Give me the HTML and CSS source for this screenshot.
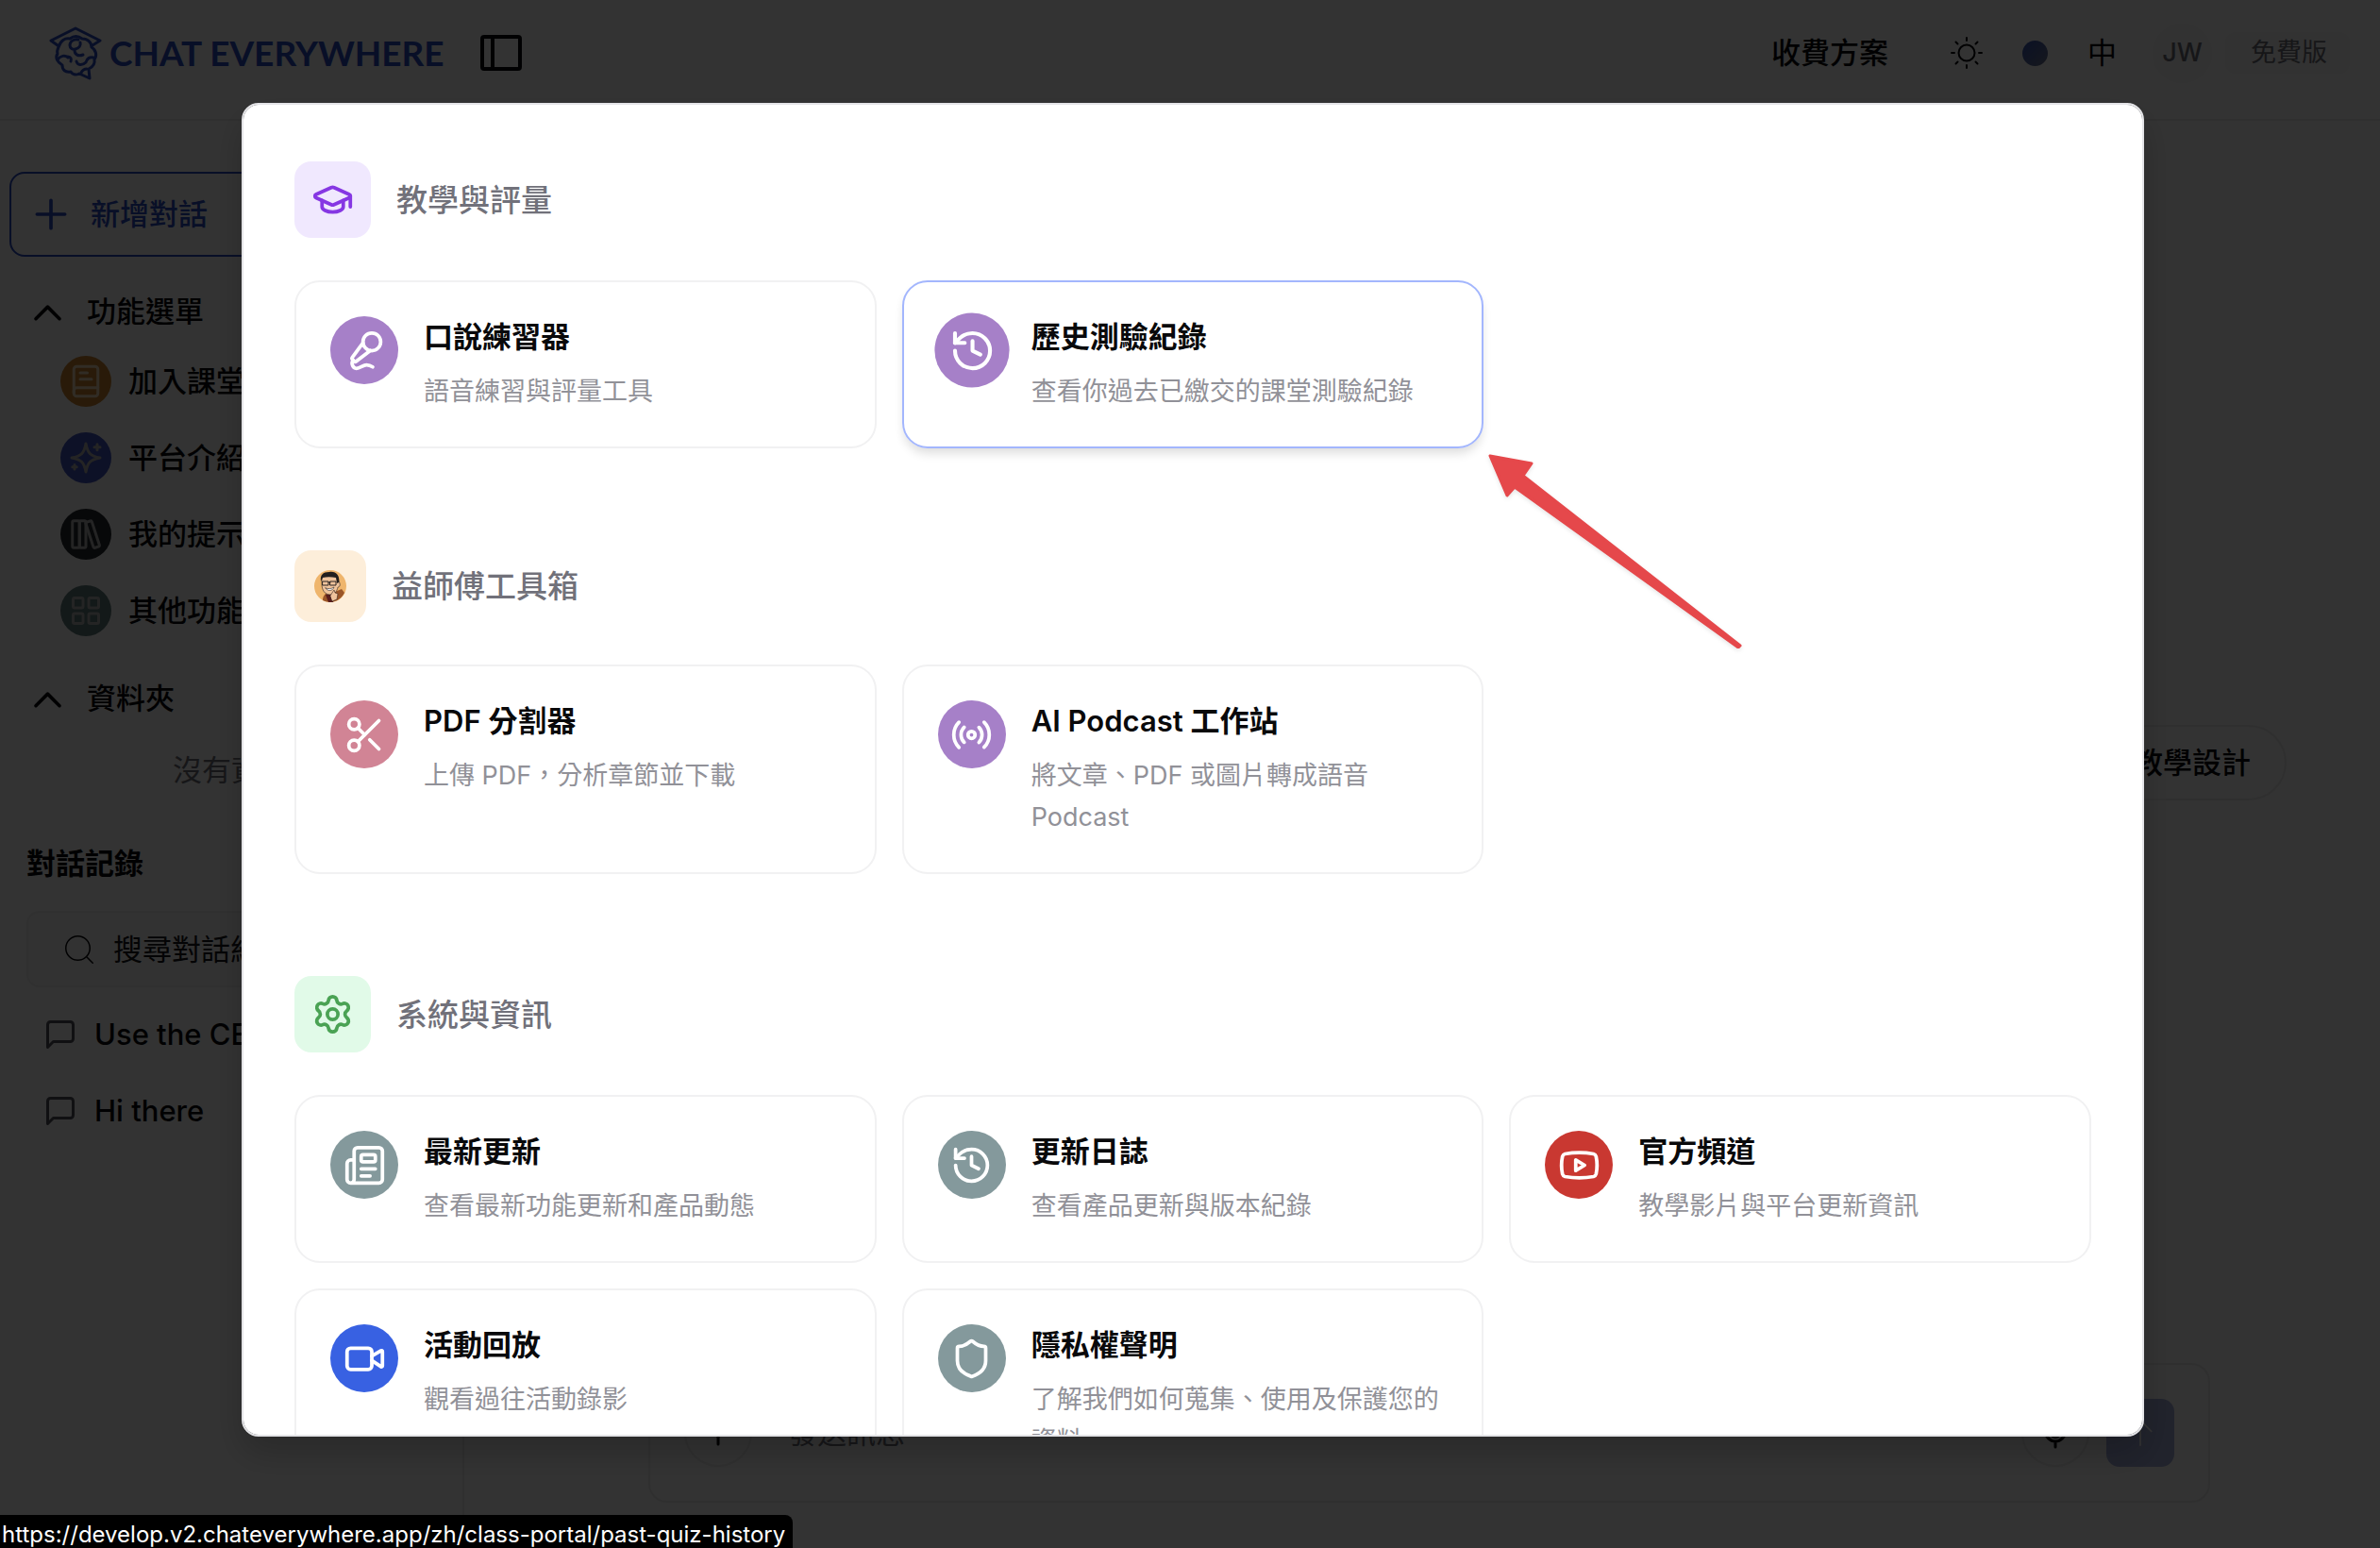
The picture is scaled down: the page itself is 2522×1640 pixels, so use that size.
FILE: index.html
```html
<!DOCTYPE html>
<html lang="zh-Hant">
<head>
    <meta charset="UTF-8">
    <meta name="viewport" content="width=device-width, initial-scale=1.0">
    <title>Chat Everywhere</title>
    <link rel="stylesheet" href="styles.css">
</head>
<body>
    <!-- Icons -->
    <svg class="sprite" aria-hidden="true">
        <symbol id="i-plus" viewBox="0 0 24 24"><path d="M4 12h16M12 4v16"/></symbol>
        <symbol id="i-up" viewBox="0 0 24 24"><path d="m5 16 7-7 7 7"/></symbol>
        <symbol id="i-history" viewBox="0 0 24 24"><path d="M3 12a9 9 0 1 0 9-9 9.75 9.75 0 0 0-6.74 2.74L3 8"/><path d="M3 3v5h5"/><path d="M12 7v5l4 2"/></symbol>
        <symbol id="i-chat" viewBox="0 0 24 24"><path d="M21 15a2 2 0 0 1-2 2H7l-4 4V5a2 2 0 0 1 2-2h14a2 2 0 0 1 2 2z"/></symbol>
    </svg>

    <header class="topbar">
        <a class="logo" href="#">
            <svg class="logo-mark" viewBox="0 0 56 58">
                <path d="M2 16 28 3l26 13-8 5M2 16l7 5"/>
                <path d="M10 23c2-7 7-10 12-9 4-3 9-3 13 0 6 0 10 4 10 9 5 3 6 9 3 13 1 5-2 8-6 10l1 10-11-5c-4 2-7 1-9-2-6 1-9-2-9-7-5-3-8-8-5-12-1-3 0-5 1-7z"/>
                <path d="M31 15c-5-1-9 2-9 6 0 3 3 5 6 4 4-1 6-4 5-7M27 26c0 5 4 7 9 5M9 36c3-4 8-5 11-2M20 33c3 0 4 3 3 5M29 38c1 4 6 5 10 1 1-4 4-6 8-5M40 46c-3 0-5 2-6 4"/>
            </svg>
            <span>CHAT EVERYWHERE</span>
        </a>
        <button class="icon-button" aria-label="側邊欄">
            <svg class="panel-icon" viewBox="0 0 44 38"><rect x="2" y="2" width="40" height="34" rx="2"/><path d="M13 2v34"/></svg>
        </button>
        <nav class="top-nav">
            <a class="pricing" href="#">收費方案</a>
            <button class="icon-button" aria-label="主題">
                <svg class="sun-icon" viewBox="0 0 34 34"><circle cx="17" cy="17" r="8.500"/><path d="M17 1v3M17 30v3M1 17h3M30 17h3M5.500 5.500l2 2M26.500 26.500l2 2M5.500 28.500l2-2M26.500 7.500l2-2"/></svg>
            </button>
            <button class="color-dot" aria-label="顏色"></button>
            <button class="lang">中</button>
            <button class="avatar">JW</button>
            <span class="plan">免費版</span>
        </nav>
    </header>

    <div class="layout">
        <aside class="sidebar">
            <button class="new-chat">
                <svg class="icon-lg" viewBox="0 0 24 24"><use href="#i-plus"/></svg>
                新增對話
            </button>

            <section class="group">
                <button class="group-title"><svg class="icon-caret" viewBox="0 0 24 24"><use href="#i-up"/></svg>功能選單</button>
                <a class="menu-item" href="#">
                    <span class="dot dot-orange"><svg class="icon-menu" viewBox="0 0 24 24"><rect x="3.500" y="1.500" width="17" height="21" rx="2"/><path d="M3.500 20v-1.500a2 2 0 0 1 2-2h15M8 6h5M8 10.500h8"/></svg></span>
                    加入課堂
                </a>
                <a class="menu-item" href="#">
                    <span class="dot dot-blue"><svg class="icon-menu" viewBox="0 0 24 24"><path d="M12 2c1.200 6.500 3 8.700 10 10-7 1.300-8.800 3.500-10 10-1.200-6.500-3-8.700-10-10 7-1.300 8.800-3.500 10-10zM20 2.500v4M18 4.500h4M4 17v3M2.500 18.500h3"/></svg></span>
                    平台介紹
                </a>
                <a class="menu-item" href="#">
                    <span class="dot dot-black"><svg class="icon-menu" viewBox="0 0 24 24"><rect x="2.500" y="2.500" width="5" height="19" rx="1"/><rect x="7.500" y="2.500" width="4.500" height="19" rx="1"/><rect x="14.500" y="2.500" width="4.500" height="19" rx="1" transform="rotate(-18 17 12)"/></svg></span>
                    我的提示詞
                </a>
                <a class="menu-item" href="#">
                    <span class="dot dot-teal"><svg class="icon-menu" viewBox="0 0 24 24"><rect x="3" y="3" width="7" height="7" rx="1"/><rect x="14" y="3" width="7" height="7" rx="1"/><rect x="14" y="14" width="7" height="7" rx="1"/><rect x="3" y="14" width="7" height="7" rx="1"/></svg></span>
                    其他功能
                </a>
            </section>

            <section class="group">
                <button class="group-title"><svg class="icon-caret" viewBox="0 0 24 24"><use href="#i-up"/></svg>資料夾</button>
                <p class="empty">沒有資料</p>
            </section>

            <h2 class="history-title">對話記錄</h2>
            <label class="search">
                <svg class="icon-search" viewBox="0 0 24 24"><circle cx="11" cy="11" r="8.500"/><path d="m17.200 17.200 4.300 4.300"/></svg>
                <input type="text" placeholder="搜尋對話紀錄" aria-label="搜尋對話紀錄">
            </label>
            <div class="chats">
                <a class="chat" href="#"><svg class="icon-chat" viewBox="0 0 24 24"><use href="#i-chat"/></svg>Use the CE platform</a>
                <a class="chat" href="#"><svg class="icon-chat" viewBox="0 0 24 24"><use href="#i-chat"/></svg>Hi there</a>
            </div>
        </aside>

        <main class="main">
            <div class="suggestions">
                <button class="chip">教學設計</button>
            </div>
            <form class="composer">
                <button type="button" class="round" aria-label="附加"><svg class="icon-round" viewBox="0 0 24 24"><use href="#i-plus"/></svg></button>
                <input type="text" placeholder="發送訊息" aria-label="發送訊息">
                <button type="button" class="round" aria-label="語音"><svg class="icon-round" viewBox="0 0 24 24"><rect x="9" y="2" width="6" height="13" rx="3"/><path d="M19 11a7 7 0 0 1-14 0M12 18v4"/></svg></button>
                <button type="button" class="send" aria-label="送出"><svg class="icon-send" viewBox="0 0 24 24"><path d="M12 20V4M5 11l7-7 7 7"/></svg></button>
            </form>
        </main>
    </div>

    <div class="overlay">
        <div class="modal" role="dialog" aria-modal="true">
            <section class="section">
                <header class="section-header">
                    <span class="section-icon purple">
                        <svg class="icon" viewBox="0 0 24 24"><path d="M21.420 10.922a1 1 0 0 0-.019-1.838L12.830 5.180a2 2 0 0 0-1.660 0L2.600 9.080a1 1 0 0 0 0 1.832l8.570 3.908a2 2 0 0 0 1.660 0z"/><path d="M22 10v6"/><path d="M6 12.500V16a6 3 0 0 0 12 0v-3.500"/></svg>
                    </span>
                    <h2>教學與評量</h2>
                </header>
                <div class="cards">
                    <a class="card" href="#">
                        <span class="badge bg-purple"><svg class="icon" viewBox="0 0 24 24"><path d="m11 7.601-5.994 8.190a1 1 0 0 0 .1 1.298l.817.818a1 1 0 0 0 1.314.087L15.090 12"/><path d="M16.500 21.174C15.500 20.500 14.372 20 13 20c-2.058 0-3.928 2.356-6 2-2.072-.356-2.775-3.369-1.500-4.500"/><circle cx="16" cy="7" r="5"/></svg></span>
                        <span class="card-text"><strong>口說練習器</strong><span>語音練習與評量工具</span></span>
                    </a>
                    <a class="card active" href="#">
                        <span class="badge bg-purple"><svg class="icon" viewBox="0 0 24 24"><use href="#i-history"/></svg></span>
                        <span class="card-text"><strong>歷史測驗紀錄</strong><span>查看你過去已繳交的課堂測驗紀錄</span></span>
                    </a>
                </div>
            </section>

            <section class="section">
                <header class="section-header">
                    <span class="section-icon peach">
                        <svg class="portrait" viewBox="0 0 34 34">
                            <circle cx="17" cy="17" r="17" fill="#efb56c"/>
                            <path d="M9 32c0-4 2-7 5-8l8-1 7-3 3 4a17 17 0 0 1-23 8z" fill="#9a5528"/>
                            <path d="M12 26l3 8h5l2-9z" fill="#5a1d1c"/>
                            <path d="M8 10c0-5 4-7 9-7s9 3 9 8l1 3c1 3-1 4-2 4-1 5-4 8-8 8-6 0-9-5-9-11z" fill="#efc39c" stroke="#2a2321" stroke-width=".6"/>
                            <path d="M7 12C6 5 9 2 16 2c7-1 11 3 10 11l-2 1-1-6c-5-1-10-1-14 0z" fill="#231f1e"/>
                            <path d="M9 12h6v4H9zM17 12h6v4h-6zM15 13h2" fill="none" stroke="#2a2321" stroke-width="1"/>
                            <path d="M12 19c3 1 6 1 9-1-1 4-7 5-9 1z" fill="#fff" stroke="#2a2321" stroke-width=".6"/>
                            <path d="M17 27l4-6 1 3 3 1-1 6-5 2z" fill="#efc39c" stroke="#3a2820" stroke-width=".6"/>
                        </svg>
                    </span>
                    <h2>益師傅工具箱</h2>
                </header>
                <div class="cards">
                    <a class="card" href="#">
                        <span class="badge bg-pink"><svg class="icon" viewBox="0 0 24 24"><circle cx="6" cy="6" r="3"/><path d="M8.120 8.120 12 12"/><path d="M20 4 8.120 15.880"/><circle cx="6" cy="18" r="3"/><path d="M14.800 14.800 20 20"/></svg></span>
                        <span class="card-text"><strong>PDF 分割器</strong><span>上傳 PDF，分析章節並下載</span></span>
                    </a>
                    <a class="card" href="#">
                        <span class="badge bg-purple"><svg class="icon" viewBox="0 0 24 24"><path d="M4.900 19.100C1 15.200 1 8.800 4.900 4.900"/><path d="M7.800 16.200c-2.300-2.300-2.300-6.100 0-8.500"/><circle cx="12" cy="12" r="2"/><path d="M16.200 7.800c2.300 2.300 2.300 6.100 0 8.500"/><path d="M19.100 4.900C23 8.800 23 15.100 19.100 19"/></svg></span>
                        <span class="card-text"><strong>AI Podcast 工作站</strong><span>將文章、PDF 或圖片轉成語音 Podcast</span></span>
                    </a>
                </div>
            </section>

            <section class="section">
                <header class="section-header">
                    <span class="section-icon green">
                        <svg class="icon" viewBox="0 0 24 24"><path d="M9.671 4.136a2.340 2.340 0 0 1 4.659 0 2.340 2.340 0 0 0 3.319 1.915 2.340 2.340 0 0 1 2.330 4.033 2.340 2.340 0 0 0 0 3.831 2.340 2.340 0 0 1-2.330 4.033 2.340 2.340 0 0 0-3.319 1.915 2.340 2.340 0 0 1-4.659 0 2.340 2.340 0 0 0-3.320-1.915 2.340 2.340 0 0 1-2.330-4.033 2.340 2.340 0 0 0 0-3.831A2.340 2.340 0 0 1 6.350 6.051a2.340 2.340 0 0 0 3.319-1.915"/><circle cx="12" cy="12" r="3"/></svg>
                    </span>
                    <h2>系統與資訊</h2>
                </header>
                <div class="cards">
                    <a class="card" href="#">
                        <span class="badge bg-slate"><svg class="icon" viewBox="0 0 24 24"><path d="M15 18h-5M18 14h-8"/><path d="M4 22h16a2 2 0 0 0 2-2V4a2 2 0 0 0-2-2H8a2 2 0 0 0-2 2v16a2 2 0 0 1-4 0v-9a2 2 0 0 1 2-2h2"/><rect x="10" y="6" width="8" height="4" rx="1"/></svg></span>
                        <span class="card-text"><strong>最新更新</strong><span>查看最新功能更新和產品動態</span></span>
                    </a>
                    <a class="card" href="#">
                        <span class="badge bg-slate"><svg class="icon" viewBox="0 0 24 24"><use href="#i-history"/></svg></span>
                        <span class="card-text"><strong>更新日誌</strong><span>查看產品更新與版本紀錄</span></span>
                    </a>
                    <a class="card" href="#">
                        <span class="badge bg-red"><svg class="icon" viewBox="0 0 24 24"><path d="M2.500 17a24.120 24.120 0 0 1 0-10 2 2 0 0 1 1.400-1.400 49.560 49.560 0 0 1 16.200 0A2 2 0 0 1 21.500 7a24.120 24.120 0 0 1 0 10 2 2 0 0 1-1.400 1.400 49.550 49.550 0 0 1-16.200 0A2 2 0 0 1 2.500 17"/><path d="m10 15 5-3-5-3z"/></svg></span>
                        <span class="card-text"><strong>官方頻道</strong><span>教學影片與平台更新資訊</span></span>
                    </a>
                    <a class="card" href="#">
                        <span class="badge bg-blue"><svg class="icon" viewBox="0 0 24 24"><path d="m16 13 5.223 3.482a.5.5 0 0 0 .777-.416V7.870a.5.5 0 0 0-.752-.432L16 10.500"/><rect x="2" y="6" width="14" height="12" rx="2"/></svg></span>
                        <span class="card-text"><strong>活動回放</strong><span>觀看過往活動錄影</span></span>
                    </a>
                    <a class="card" href="#">
                        <span class="badge bg-slate"><svg class="icon" viewBox="0 0 24 24"><path d="M20 13c0 5-3.500 7.500-7.660 8.950a1 1 0 0 1-.67-.01C7.500 20.500 4 18 4 13V6a1 1 0 0 1 1-1c2 0 4.500-1.200 6.240-2.720a1.170 1.170 0 0 1 1.520 0C14.510 3.810 17 5 19 5a1 1 0 0 1 1 1z"/></svg></span>
                        <span class="card-text"><strong>隱私權聲明</strong><span>了解我們如何蒐集、使用及保護您的資料</span></span>
                    </a>
                </div>
            </section>
        </div>
    </div>

    <!-- Pointer to the history card -->
    <svg class="arrow" viewBox="0 0 272 208" aria-hidden="true">
        <path d="M4 4 48 12 39 25 269 205 267 207 30 37 22 46z"/>
    </svg>

    <div class="status-url">https://develop.v2.chateverywhere.app/zh/class-portal/past-quiz-history</div>
</body>
</html>
```
FILE: styles.css
```css
* {
    box-sizing: border-box;
}

body {
    margin: 0;
    height: 100vh;
    overflow: hidden;
    display: flex;
    flex-direction: column;
    background: #fcfcfc;
    color: #09090b;
    font-family: Inter, "Noto Sans CJK TC", sans-serif;
    font-size: 31px;
    font-weight: 500;
    line-height: 44px;
}

a {
    color: inherit;
    text-decoration: none;
}

button,
input {
    font: inherit;
    color: inherit;
    background: none;
    border: 0;
    padding: 0;
}

h2,
p {
    margin: 0;
    font-size: inherit;
}

svg {
    display: block;
    flex: none;
    fill: none;
    stroke: currentColor;
    stroke-width: 2;
    stroke-linecap: round;
    stroke-linejoin: round;
}

.sprite {
    display: none;
}

/* Top bar */
.topbar {
    height: 128px;
    flex: none;
    display: flex;
    align-items: center;
    padding: 0 32px 14px 52px;
    border-bottom: 2px solid #e8e8e8;
}

.logo {
    display: flex;
    align-items: center;
    gap: 8px;
    margin-right: 38px;
    color: #2c4bc4;
    font-family: Lato, sans-serif;
    font-size: 37px;
    font-weight: 700;
}

.logo-mark {
    width: 56px;
    height: 58px;
    stroke-width: 3;
}

.panel-icon {
    width: 44px;
    height: 38px;
    stroke-width: 4;
}

.top-nav {
    display: flex;
    align-items: center;
    margin-left: auto;
}

.sun-icon {
    width: 34px;
    height: 34px;
    margin-left: 66px;
}

.color-dot {
    width: 27px;
    height: 27px;
    margin-left: 42px;
    border-radius: 50%;
    background: linear-gradient(135deg, #3454b8, #6e7690);
}

.lang {
    margin-left: 42px;
    font-weight: 400;
}

.avatar {
    width: 63px;
    height: 63px;
    margin-left: 38px;
    border-radius: 50%;
    background: #f9f9f9;
    color: #71717a;
    font-size: 27px;
}

.plan {
    margin-left: 14px;
    padding: 0 24px 0 27px;
    border-radius: 12px;
    background: #f9f9f9;
    color: #71717a;
    font-size: 27px;
    font-weight: 400;
}

/* Sidebar */
.layout {
    flex: 1;
    display: flex;
    min-height: 0;
}

.sidebar {
    width: 492px;
    flex: none;
    padding-top: 54px;
    border-right: 2px solid #e8e8e8;
}

.new-chat {
    display: flex;
    align-items: center;
    gap: 20px;
    width: 470px;
    height: 90px;
    margin: 0 10px 5px;
    padding: 0 20px;
    border: 2px solid #2c4bc4;
    border-radius: 16px;
    color: #2c4bc4;
}

.icon-lg {
    width: 44px;
    height: 44px;
}

.group {
    padding-top: 20px;
}

.group-title {
    display: flex;
    align-items: center;
    gap: 20px;
    height: 66px;
    padding-left: 29px;
}

.icon-caret {
    width: 43px;
    height: 43px;
}

.menu-item {
    display: flex;
    align-items: center;
    gap: 18px;
    height: 81px;
    padding-left: 64px;
}

.dot {
    display: flex;
    align-items: center;
    justify-content: center;
    width: 54px;
    height: 54px;
    border-radius: 50%;
    color: #b4b4b4;
}

.icon-menu {
    width: 36px;
    height: 36px;
}

.dot-orange {
    background: #cb8430;
    color: #f2dcb8;
}

.dot-blue {
    background: #4054c4;
}

.dot-black {
    background: #24282e;
}

.dot-teal {
    background: #5f7c7c;
}

.empty {
    height: 86px;
    line-height: 86px;
    text-align: center;
    color: #71717a;
    font-weight: 400;
}

.history-title {
    margin: 23px 0 17px 28px;
    line-height: 66px;
    font-weight: 700;
}

.search {
    display: flex;
    align-items: center;
    gap: 18px;
    height: 81px;
    margin: 0 28px 9px;
    padding-left: 36px;
    border: 2px solid #efefef;
    border-radius: 14px;
    background: #f8f8f8;
    font-weight: 400;
}

.search input {
    flex: 1;
    min-width: 0;
}

.search input::placeholder {
    color: #18181b;
}

.icon-search {
    width: 36px;
    height: 36px;
    stroke-width: 1;
}

.chat {
    display: flex;
    align-items: center;
    gap: 18px;
    height: 81px;
    padding-left: 46px;
    white-space: nowrap;
}

.icon-chat {
    width: 36px;
    height: 36px;
    color: #52525b;
}

/* Main area */
.main {
    flex: 1;
    display: flex;
    flex-direction: column;
    padding: 44px 180px 48px 195px;
}

.suggestions {
    flex: 1;
    display: flex;
    align-items: center;
    justify-content: flex-end;
    margin-right: -81px;
}

.chip {
    height: 80px;
    padding: 0 36px;
    border: 2px solid #ececec;
    border-radius: 40px;
}

.composer {
    display: flex;
    align-items: center;
    padding: 36px;
    border: 2px solid #ececec;
    border-radius: 20px;
}

.composer input {
    flex: 1;
    min-width: 0;
    margin-left: 38px;
    font-weight: 400;
}

.composer input::placeholder {
    color: #71717a;
}

.round {
    display: flex;
    align-items: center;
    justify-content: center;
    width: 72px;
    height: 72px;
    border: 2px solid #ececec;
    border-radius: 50%;
}

.icon-round {
    width: 36px;
    height: 36px;
}

.send {
    display: flex;
    align-items: center;
    justify-content: center;
    width: 72px;
    height: 72px;
    margin-left: 18px;
    border-radius: 14px;
    background: #a3addb;
    color: #fff;
}

.icon-send {
    width: 40px;
    height: 40px;
    stroke-width: 1;
}

/* Modal */
.overlay {
    position: fixed;
    inset: 0;
    display: flex;
    justify-content: center;
    padding: 109px 54px 118px 60px;
    background: rgba(0, 0, 0, 0.8);
}

.modal {
    width: 100%;
    max-width: 2016px;
    overflow-y: auto;
    scrollbar-width: none;
    padding: 60px 54px;
    border: 2px solid #e4e4e7;
    border-radius: 18px;
    background: #fff;
    box-shadow: 0 18px 36px rgba(0, 0, 0, 0.2);
}

.section {
    margin-bottom: 108px;
}

.section-header {
    display: flex;
    align-items: center;
    gap: 27px;
    margin-bottom: 45px;
    color: #71717a;
}

.section-header h2 {
    font-size: 33px;
    font-weight: 500;
}

.section-icon {
    padding: 18px;
    border-radius: 18px;
}

.section-icon.purple {
    background: #f0e8fe;
    color: #8637e3;
}

.section-icon.peach {
    padding: 21px;
    background: #fdeeda;
}

.section-icon.green {
    background: #e1fae8;
    color: #4aa254;
}

.icon {
    width: 45px;
    height: 45px;
}

.portrait {
    width: 34px;
    height: 34px;
    stroke: none;
}

.cards {
    display: grid;
    grid-template-columns: repeat(3, 1fr);
    gap: 27px;
}

.card {
    display: flex;
    align-items: flex-start;
    gap: 27px;
    padding: 36px;
    border: 2px solid #f1f1f2;
    border-radius: 27px;
}

.card.active {
    border-color: #a3b6fd;
    box-shadow: 0 7px 11px -2px rgba(0, 0, 0, 0.14);
}

.card.active .badge {
    transform: scale(1.1);
}

.badge {
    display: flex;
    align-items: center;
    justify-content: center;
    flex: none;
    width: 72px;
    height: 72px;
    border-radius: 50%;
    color: #fff;
}

.bg-purple {
    background: #a680c8;
}

.bg-pink {
    background: #d18495;
}

.bg-slate {
    background: #84999c;
}

.bg-red {
    background: #c93831;
}

.bg-blue {
    background: #3861e2;
}

.card-text {
    display: flex;
    flex-direction: column;
    gap: 14px;
}

.card-text strong {
    font-weight: 600;
}

.card-text span {
    color: #919198;
    font-size: 27px;
    font-weight: 400;
}

/* Drawn over the modal */
.arrow {
    position: absolute;
    left: 1575px;
    top: 479px;
    width: 272px;
    height: 208px;
    fill: #e5484b;
    stroke: #e5484b;
    stroke-width: 3;
    filter: drop-shadow(0 2px 2px rgba(0, 0, 0, 0.1));
}

.status-url {
    position: absolute;
    left: 0;
    bottom: 0;
    height: 35px;
    padding: 0 8px 0 2px;
    border-radius: 0 8px 0 0;
    background: #000;
    color: #fff;
    font-size: 24px;
    font-weight: 400;
    line-height: 42px;
}
```
